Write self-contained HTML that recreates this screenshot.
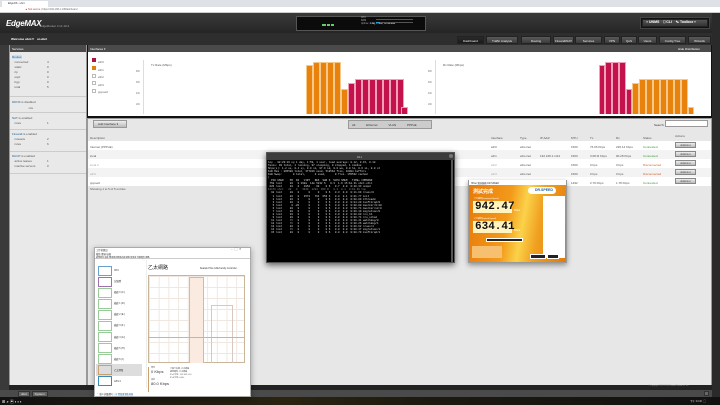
<!DOCTYPE html><html><head><meta charset="utf-8"><style>
*{margin:0;padding:0;box-sizing:border-box}
body{width:720px;height:405px;overflow:hidden;background:#3a3a3a;font-family:"Liberation Sans","Noto Sans CJK TC",sans-serif;font-size:3px;position:relative;color:#333}
.a{position:absolute}
.t{position:absolute;white-space:nowrap;font-size:3px}
.tab{position:absolute;top:36px;height:8px;background:linear-gradient(#5a5a5a,#3c3c3c);color:#eee;font-size:3px;line-height:8px;text-align:center;border:1px solid #222}
.row{position:absolute;left:88px;width:623px;height:9px}
.bar{position:absolute;bottom:0;border:1px solid #fde;border-bottom:none}
.o{background:#e8820c;border-color:#f5c98a}
.p{background:#c4134c;border-color:#f0a0b8}
.btn{position:absolute;width:21px;height:6px;background:linear-gradient(#eee,#bbb);border:1px solid #888;font-size:2.5px;text-align:center;line-height:5px}
.tm{position:absolute;left:2px;width:40px;height:14px}
.tm i{position:absolute;left:0;top:1px;width:14px;height:10px;border:1px solid #aac}
</style></head><body>
<div class="a" style="left:0;top:0;width:720px;height:7px;background:#dee1e6"></div>
<div class="a" style="left:2px;top:1px;width:46px;height:6px;background:#fff"></div>
<div class="t" style="left:8px;top:2px;color:#333;font-size:2.5px">EdgeOS - ubnt</div>
<div class="a" style="left:0;top:7px;width:720px;height:6px;background:#fff;border-bottom:1px solid #ccc"></div>
<div class="t" style="left:25px;top:8px;color:#666;font-size:2.5px"><span style="color:#c33">▲ Not secure</span> | https://192.168.1.1/#Dashboard</div>
<div class="a" style="left:0;top:13px;width:720px;height:20px;background:linear-gradient(#3a3a3a,#252525)"></div>
<div class="t" style="left:6px;top:19px;color:#fff;font-size:8px;font-style:italic;font-weight:bold;letter-spacing:-0.3px">EdgeMAX</div>
<div class="t" style="left:40px;top:24px;color:#aaa;font-size:3px">EdgeRouter 4 v1.10.2</div>
<div class="a" style="left:296px;top:16px;width:130px;height:15px;background:#0b0b0b;border:1px solid #555"></div>
<div class="a" style="left:322px;top:24px;width:4px;height:2px;background:#6c6"></div>
<div class="a" style="left:327px;top:24px;width:3px;height:2px;background:#6c6"></div>
<div class="a" style="left:331px;top:24px;width:3px;height:2px;background:#6c6"></div>
<div class="t" style="left:361px;top:17px;color:#aaa;font-size:2.3px;line-height:3px">CPU<br>RAM<br>Uptime: <span style="color:#fff">1 day, 1 hour, 59 minutes</span></div>
<div class="a" style="left:376px;top:19px;width:37px;height:1px;background:#555"></div>
<div class="a" style="left:376px;top:22px;width:37px;height:1px;background:#555"></div>
<div class="a" style="left:376px;top:22px;width:4px;height:1px;background:#39c"></div>
<div class="a" style="left:640px;top:17px;width:70px;height:12px;background:#111;border:1px solid #444"></div>
<div class="a" style="left:642px;top:19px;width:66px;height:8px;background:linear-gradient(#555,#333);border:1px solid #222"></div>
<div class="t" style="left:646px;top:20px;color:#fff;font-size:3.5px;font-weight:bold">≡ UNMS &nbsp;&nbsp; ⎕ CLI &nbsp;&nbsp; ✎ Toolbox ▾</div>
<div class="a" style="left:0;top:33px;width:720px;height:12px;background:#2e2e2e"></div>
<div class="t" style="left:11px;top:37px;color:#fff;font-weight:bold">Welcome ubnt ▾ &nbsp;&nbsp; ui.ubnt</div>
<div class="tab" style="left:457px;width:27px;background:linear-gradient(#2a2a2a,#1a1a1a)">Dashboard</div>
<div class="tab" style="left:486px;width:32px">Traffic Analysis</div>
<div class="tab" style="left:521px;width:30px">Routing</div>
<div class="tab" style="left:553px;width:21px">Firewall/NAT</div>
<div class="tab" style="left:575px;width:27px">Services</div>
<div class="tab" style="left:604px;width:16px">VPN</div>
<div class="tab" style="left:621px;width:16px">QoS</div>
<div class="tab" style="left:638px;width:19px">Users</div>
<div class="tab" style="left:659px;width:27px">Config Tree</div>
<div class="tab" style="left:688px;width:23px">Wizards</div>
<div class="a" style="left:9px;top:45px;width:78px;height:345px;background:#e9e9e9;border:1px solid #999"></div>
<div class="a" style="left:10px;top:45px;width:76px;height:7px;background:#4a4a4a"></div>
<div class="t" style="left:12px;top:47px;color:#fff">Services</div>
<div class="t" style="left:12px;top:55px;line-height:5px;color:#555"><span style="background:#cde;color:#269">Routes</span><br>&nbsp;&nbsp;&nbsp;connected<br>&nbsp;&nbsp;&nbsp;static<br>&nbsp;&nbsp;&nbsp;rip<br>&nbsp;&nbsp;&nbsp;ospf<br>&nbsp;&nbsp;&nbsp;bgp<br>&nbsp;&nbsp;&nbsp;total</div>
<div class="t" style="left:47px;top:60px;line-height:5px;color:#555">4<br>0<br>0<br>0<br>0<br>5</div>
<div class="a" style="left:10px;top:96px;width:76px;height:1px;background:#ccc"></div>
<div class="t" style="left:12px;top:99px;line-height:6px;color:#555"><span style="color:#269">DDNS</span> is disabled<br>&nbsp;&nbsp;&nbsp;&nbsp;&nbsp;&nbsp;&nbsp;&nbsp;&nbsp;&nbsp;&nbsp;&nbsp;&nbsp;&nbsp;&nbsp;&nbsp;&nbsp;&nbsp;&nbsp;&nbsp;n/a</div>
<div class="a" style="left:10px;top:112px;width:76px;height:1px;background:#ccc"></div>
<div class="t" style="left:12px;top:116px;line-height:5px;color:#555"><span style="color:#269">NAT</span> is enabled<br>&nbsp;&nbsp;&nbsp;rules</div>
<div class="t" style="left:47px;top:121px;color:#555">1</div>
<div class="a" style="left:10px;top:129px;width:76px;height:1px;background:#ccc"></div>
<div class="t" style="left:12px;top:132px;line-height:5px;color:#555"><span style="color:#269">Firewall</span> is enabled<br>&nbsp;&nbsp;&nbsp;rulesets<br>&nbsp;&nbsp;&nbsp;rules</div>
<div class="t" style="left:47px;top:137px;line-height:5px;color:#555">2<br>6</div>
<div class="a" style="left:10px;top:151px;width:76px;height:1px;background:#ccc"></div>
<div class="t" style="left:12px;top:154px;line-height:5px;color:#555"><span style="color:#269">DHCP</span> is enabled<br>&nbsp;&nbsp;&nbsp;active leases<br>&nbsp;&nbsp;&nbsp;inactive servers</div>
<div class="t" style="left:47px;top:159px;line-height:5px;color:#555">1<br>0</div>
<div class="a" style="left:10px;top:173px;width:76px;height:1px;background:#ccc"></div>
<div class="a" style="left:87px;top:45px;width:625px;height:73px;background:#fff;border:1px solid #111;border-bottom-width:2px"></div>
<div class="a" style="left:88px;top:45px;width:623px;height:7px;background:#4a4a4a"></div>
<div class="t" style="left:90px;top:47px;color:#fff">Interfaces ▾</div>
<div class="t" style="left:678px;top:47px;color:#fff">Hide Distribution</div>
<div class="a" style="left:92px;top:58px;width:4px;height:4px;background:#b0123f"></div>
<div class="a" style="left:92px;top:66px;width:4px;height:4px;background:#e2800c"></div>
<div class="a" style="left:92px;top:74px;width:4px;height:4px;border:1px solid #bbb"></div>
<div class="a" style="left:92px;top:81px;width:4px;height:4px;border:1px solid #bbb"></div>
<div class="a" style="left:92px;top:89px;width:4px;height:4px;border:1px solid #bbb"></div>
<div class="t" style="left:98px;top:59px;line-height:7.6px;color:#666">eth0<br>eth1<br>eth2<br>eth3<br>pppoe0</div>
<div class="a" style="left:143px;top:60px;width:1px;height:54px;background:#ddd"></div>
<div class="t" style="left:136px;top:67px;line-height:11px;color:#777;font-size:2.3px">800<br>600<br>400<br>200</div>
<div class="t" style="left:151px;top:63px;color:#555">Tx Rate (Mbps)</div>
<div class="a" style="left:435px;top:60px;width:1px;height:54px;background:#ddd"></div>
<div class="t" style="left:428px;top:67px;line-height:11px;color:#777;font-size:2.3px">800<br>600<br>400<br>200</div>
<div class="t" style="left:443px;top:63px;color:#555">Rx Rate (Mbps)</div>
<div class="a" style="left:300px;top:60px;width:108px;height:54px">
<div class="bar o" style="left:6px;width:7px;height:49px"></div>
<div class="bar o" style="left:13px;width:7px;height:52px"></div>
<div class="bar o" style="left:20px;width:7px;height:52px"></div>
<div class="bar o" style="left:27px;width:7px;height:52px"></div>
<div class="bar o" style="left:34px;width:7px;height:52px"></div>
<div class="bar o" style="left:41px;width:7px;height:25px"></div>
<div class="bar p" style="left:48px;width:7px;height:31px"></div>
<div class="bar p" style="left:55px;width:7px;height:35px"></div>
<div class="bar p" style="left:62px;width:7px;height:35px"></div>
<div class="bar p" style="left:69px;width:7px;height:35px"></div>
<div class="bar p" style="left:76px;width:7px;height:35px"></div>
<div class="bar p" style="left:83px;width:7px;height:35px"></div>
<div class="bar p" style="left:90px;width:7px;height:35px"></div>
<div class="bar p" style="left:97px;width:7px;height:35px"></div>
<div class="bar p" style="left:101px;width:7px;height:7px"></div>
</div>
<div class="a" style="left:592px;top:60px;width:108px;height:54px">
<div class="bar p" style="left:7px;width:6px;height:49px"></div>
<div class="bar p" style="left:13px;width:7px;height:52px"></div>
<div class="bar p" style="left:20px;width:7px;height:52px"></div>
<div class="bar p" style="left:27px;width:7px;height:52px"></div>
<div class="bar p" style="left:34px;width:6px;height:25px"></div>
<div class="bar o" style="left:40px;width:7px;height:31px"></div>
<div class="bar o" style="left:47px;width:7px;height:35px"></div>
<div class="bar o" style="left:54px;width:7px;height:35px"></div>
<div class="bar o" style="left:61px;width:7px;height:35px"></div>
<div class="bar o" style="left:68px;width:7px;height:35px"></div>
<div class="bar o" style="left:75px;width:7px;height:35px"></div>
<div class="bar o" style="left:82px;width:7px;height:35px"></div>
<div class="bar o" style="left:89px;width:7px;height:35px"></div>
<div class="bar o" style="left:96px;width:6px;height:7px"></div>
</div>
<div class="a" style="left:87px;top:118px;width:625px;height:268px;background:#e7e7e7;border:1px solid #999"></div>
<div class="a" style="left:93px;top:120px;width:34px;height:8px;background:linear-gradient(#eee,#bbb);border:1px solid #999"></div>
<div class="t" style="left:98px;top:122px">Add Interface ▾</div>
<div class="a" style="left:348px;top:120px;width:84px;height:9px;background:#ccc;border:1px solid #999"></div>
<div class="t" style="left:352px;top:123px;word-spacing:10px">All Ethernet VLAN PPPoE</div>
<div class="t" style="left:654px;top:123px">Search:</div>
<div class="a" style="left:665px;top:120px;width:43px;height:7px;background:#fff;border:1px solid #999"></div>
<div class="row" style="top:132px;background:#e7e7e7"></div>
<div class="row" style="top:141px;background:#fff"></div>
<div class="row" style="top:150px;background:#f3f3f3"></div>
<div class="row" style="top:159px;background:#fff"></div>
<div class="row" style="top:168px;background:#f3f3f3"></div>
<div class="row" style="top:177px;background:#fff"></div>
<div class="t" style="left:90px;top:134px;line-height:9px;color:#555">Description<br>Internet (PPPoE)<br>local<br><span style="color:#aaa">local 2</span><br><span style="color:#aaa">eth3</span><br>pppoe0</div>
<div class="t" style="left:90px;top:187px;color:#555">Showing 1 to 5 of 5 entries</div>
<div class="t" style="left:491px;top:134px;line-height:9px;color:#555">Interface<br>eth0<br>eth1<br><span style="color:#aaa">eth2</span><br><span style="color:#aaa">eth3</span><br>pppoe0</div>
<div class="t" style="left:520px;top:134px;line-height:9px;color:#555">Type<br>ethernet<br>ethernet<br>ethernet<br>ethernet<br>pppoe</div>
<div class="t" style="left:540px;top:134px;line-height:9px;color:#555">IP Addr<br><br>192.168.1.1/24</div>
<div class="t" style="left:571px;top:134px;line-height:9px;color:#555">MTU<br>1500<br>1500<br>1500<br>1500<br>1492</div>
<div class="t" style="left:590px;top:134px;line-height:9px;color:#555">Tx<br>76.06 Kbps<br>3.08 M Kbps<br>0 bps<br>0 bps<br>2.79 Kbps</div>
<div class="t" style="left:616px;top:134px;line-height:9px;color:#555">Rx<br>236.14 Kbps<br>90.28 Kbps<br>0 bps<br>0 bps<br>1.78 Kbps</div>
<div class="t" style="left:643px;top:134px;line-height:9px;color:#555">Status<br><span style="color:#393">Connected</span><br><span style="color:#393">Connected</span><br><span style="color:#c63">Disconnected</span><br><span style="color:#c63">Disconnected</span><br><span style="color:#393">Connected</span></div>
<div class="t" style="left:675px;top:134px;color:#555">Actions</div>
<div class="btn" style="left:675px;top:142px">Actions ▾</div>
<div class="btn" style="left:675px;top:151px">Actions ▾</div>
<div class="btn" style="left:675px;top:160px">Actions ▾</div>
<div class="btn" style="left:675px;top:169px">Actions ▾</div>
<div class="btn" style="left:675px;top:178px">Actions ▾</div>
<div class="a" style="left:9px;top:385px;width:703px;height:5px;background:#222"></div>
<div class="t" style="left:648px;top:385px;color:#888;font-size:2px">© Copyright 2012-2018 Ubiquiti Networks, Inc.</div>
<div class="a" style="left:0;top:390px;width:720px;height:7px;background:#4a4a4a"></div>
<div class="a" style="left:18px;top:391px;width:12px;height:6px;background:#666;border:1px solid #333"></div>
<div class="a" style="left:32px;top:391px;width:16px;height:6px;background:#666;border:1px solid #333"></div>
<div class="t" style="left:21px;top:392px;color:#eee;word-spacing:7px">ubnt System</div>
<div class="a" style="left:704px;top:391px;width:5px;height:5px;background:#666;border:1px solid #333"></div>
<div class="a" style="left:712px;top:13px;width:8px;height:384px;background:#2a2a2a"></div>
<div class="a" style="left:0;top:397px;width:720px;height:8px;background:linear-gradient(90deg,#111 0,#2a2410 40%,#1c1a10 60%,#111)"></div>
<div class="t" style="left:2px;top:399px;color:#fff;font-size:4px">⊞ ⌕ ▣ ▪ ▪ ▪</div>
<div class="t" style="left:690px;top:399px;color:#ccc;font-size:2.5px">下午 04:46 &nbsp;▢</div>
<div class="a" style="left:266px;top:152px;width:189px;height:111px;background:#000;border:1px solid #555;box-shadow:0 2px 6px rgba(0,0,0,.6)"></div>
<div class="a" style="left:267px;top:153px;width:187px;height:7px;background:#3c3c3c"></div>
<div class="t" style="left:357px;top:155px;color:#ddd">CLI</div>
<div class="a" style="left:449px;top:154px;width:4px;height:4px;border-radius:2px;background:#777"></div>
<div class="a" style="left:451px;top:160px;width:2px;height:102px;background:#555"></div>
<pre class="a" style="left:268px;top:161px;color:#ddd;font-family:'Liberation Mono',monospace;font-size:2.6px;line-height:3.05px;white-space:pre">top - 08:29:19 up 1 day, 1:59, 1 user, load average: 0.12, 0.15, 0.18
Tasks: 99 total, 1 running, 97 sleeping, 0 stopped, 1 zombie
%Cpu(s): 1.2 us, 0.4 sy, 0.0 ni, 97.9 id, 0.0 wa, 0.0 hi, 0.6 si, 0.0 st
KiB Mem : 895580 total, 377016 used, 518564 free, 16004 buffers
KiB Swap:       0 total,      0 used,      0 free. 155532 cached
|
  PID USER    PR  NI   VIRT   RES  SHR S  %CPU %MEM   TIME+ COMMAND
 758 root     20   0 160m  14m 5232 S   0.3  1.6 15:18.31 ubnt-util
 626 root     20   0   1952    60    0 S   0.7  0.0  0:20.33 snmpd
<span style="color:#888">12176 ubnt   20   0   3040  1284  960 R   0.3  0.1  0:01.69 top</span>
  10 root     20   0      0     0    0 S   0.3  0.0  0:11.69 rcuos/0
   1 root     20   0   2572   764  656 S   0.0  0.1  0:01.77 init
   2 root     20   0      0     0    0 S   0.0  0.0  0:00.09 kthreadd
   3 root     20   0      0     0    0 S   0.0  0.0  0:04.29 ksoftirqd/0
   5 root      0 -20      0     0    0 S   0.0  0.0  0:00.00 kworker/0:0H
   6 root     20   0      0     0    0 S   0.0  0.0  0:00.74 kworker/u8:0
   7 root     20   0      0     0    0 S   0.0  0.0  0:09.19 migration/0
   8 root     20   0      0     0    0 S   0.0  0.0  0:00.00 rcu_bh
   9 root     20   0      0     0    0 S   0.0  0.0  0:00.74 rcu_sched
  11 root     rt   0      0     0    0 S   0.0  0.0  0:00.41 watchdog/0
  12 root     rt   0      0     0    0 S   0.0  0.0  0:00.26 watchdog/1
  13 root     20   0      0     0    0 S   0.0  0.0  0:00.62 rcuos/1
  14 root     rt   0      0     0    0 S   0.0  0.0  0:00.17 migration/1
  15 root     20   0      0     0    0 S   0.0  0.0  0:00.79 ksoftirqd/1</pre>
<div class="a" style="left:468px;top:180px;width:99px;height:83px;background:linear-gradient(100deg,#e67a0a 0%,#f39a1a 40%,#fbd24a 55%,#f0a020 70%,#e47808 100%);border:1px solid #999;box-shadow:0 2px 5px rgba(0,0,0,.4)"></div>
<div class="a" style="left:469px;top:180px;width:97px;height:5px;background:#fff"></div>
<div class="t" style="left:471px;top:181px;font-size:2.3px;color:#333">HiNet 測速服務 DR.SPEED</div>
<div class="t" style="left:473px;top:188px;color:#fff;font-size:5px;font-weight:bold">測試完成</div>
<div class="a" style="left:528px;top:187px;width:28px;height:7px;border-radius:4px;background:#fff"></div>
<div class="t" style="left:535px;top:188px;color:#1a5a9a;font-size:3.5px;font-weight:bold">DR.SPEED</div>
<div class="a" style="left:543px;top:196px;width:22px;height:62px;background:#fff"></div>
<div class="t" style="left:474px;top:197px;font-size:2px;color:#fff">下行速率(Download Speed)</div>
<div class="a" style="left:473px;top:201px;width:39px;height:12px;background:#fff3c0"></div>
<div class="t" style="left:475px;top:201px;font-family:'Liberation Mono',monospace;font-size:11px;font-weight:bold;color:#111;line-height:12px">942.47</div>
<div class="t" style="left:514px;top:209px;color:#fff;font-size:2.5px">Mbps</div>
<div class="t" style="left:474px;top:217px;font-size:2px;color:#fff">上行速率(Upload Speed)</div>
<div class="a" style="left:473px;top:221px;width:39px;height:12px;background:#fff3c0"></div>
<div class="t" style="left:475px;top:221px;font-family:'Liberation Mono',monospace;font-size:11px;font-weight:bold;color:#111;line-height:12px">634.41</div>
<div class="t" style="left:514px;top:229px;color:#fff;font-size:2.5px">Mbps</div>
<div class="a" style="left:486px;top:238px;width:37px;height:4px;background:#222;border:1px solid #fff"></div>
<div class="a" style="left:472px;top:246px;width:30px;height:12px;background:#f6c070"></div>
<div class="a" style="left:547px;top:254px;width:12px;height:5px;background:#222;border:1px solid #fff"></div>
<div class="a" style="left:530px;top:254px;width:16px;height:5px;background:#222;border:1px solid #fff"></div>
<div class="a" style="left:94px;top:247px;width:157px;height:150px;background:#fff;border:1px solid #aaa;box-shadow:0 2px 6px rgba(0,0,0,.35)"></div>
<div class="t" style="left:96px;top:248px;font-size:2.3px;color:#333">工作管理員</div>
<div class="t" style="left:231px;top:247px;font-size:3px;color:#666">–&nbsp;&nbsp;▢&nbsp;&nbsp;✕</div>
<div class="t" style="left:96px;top:252px;font-size:2.3px;color:#333">檔案 選項 檢視</div>
<div class="a" style="left:95px;top:256px;width:155px;height:3px;border-bottom:1px solid #ccc"></div>
<div class="t" style="left:96px;top:255.5px;font-size:2px;color:#333">處理程序 效能 應用程式歷程記錄 開機 使用者 詳細資料 服務</div>
<div class="a" style="left:146px;top:260px;width:1px;height:128px;background:#eee"></div>
<div class="a" style="left:96px;top:265px;width:50px;height:120px">
<div class="tm" style="top:0"><i style="border-color:#6aa0d0"></i></div>
<div class="tm" style="top:11px"><i style="border-color:#a070b0"></i></div>
<div class="tm" style="top:22px"><i style="border-color:#9c9"></i></div>
<div class="tm" style="top:33px"><i style="border-color:#9c9"></i></div>
<div class="tm" style="top:44px"><i style="border-color:#9c9"></i></div>
<div class="tm" style="top:55px"><i style="border-color:#9c9"></i></div>
<div class="tm" style="top:66px"><i style="border-color:#9c9"></i></div>
<div class="tm" style="top:77px"><i style="border-color:#9c9"></i></div>
<div class="tm" style="top:88px"><i style="border-color:#9c9"></i></div>
<div class="a" style="left:0;top:99px;width:46px;height:12px;background:#ddd"></div>
<div class="tm" style="top:99px"><i style="border-color:#c9a070"></i></div>
<div class="tm" style="top:110px"><i style="border-color:#3a8ac0"></i></div>
</div>
<div class="t" style="left:114px;top:266px;font-size:2.3px;line-height:11.1px;color:#333">CPU<br>記憶體<br>磁碟 0 (C:)<br>磁碟 1 (D:)<br>磁碟 2 (E:)<br>磁碟 3 (F:)<br>磁碟 4 (G:)<br>磁碟 5 (H:)<br>磁碟 6 (I:)<br>乙太網路<br>GPU 0</div>
<div class="t" style="left:148px;top:264px;font-size:5px;color:#222">乙太網路</div>
<div class="t" style="left:200px;top:268px;font-size:2.3px;color:#333">Realtek PCIe GbE Family Controller</div>
<div class="a" style="left:148px;top:275px;width:97px;height:88px;border:1px solid #c9b69a;background-color:#fff;background-image:linear-gradient(#f0e8e0 1px,transparent 1px),linear-gradient(90deg,#f0e8e0 1px,transparent 1px);background-size:9.7px 11px"></div>
<div class="a" style="left:189px;top:277px;width:15px;height:86px;background:#fbeadf;border:1px solid #d8b8a0;border-bottom:none"></div>
<div class="a" style="left:211px;top:305px;width:22px;height:58px;border:1px solid #d8c8c0;border-bottom:none"></div>
<div class="a" style="left:148px;top:337px;width:97px;height:1px;background:#c9b69a"></div>
<div class="a" style="left:148px;top:367px;width:1px;height:13px;background:#c9a070"></div>
<div class="t" style="left:151px;top:366px;font-size:2px;color:#666">傳送</div>
<div class="t" style="left:151px;top:369px;font-size:4px;color:#333">0 Kbps</div>
<div class="a" style="left:148px;top:380px;width:1px;height:12px;background:#c9a070"></div>
<div class="t" style="left:151px;top:378px;font-size:2px;color:#666">接收</div>
<div class="t" style="left:151px;top:381px;font-size:4px;color:#333">80.0 Kbps</div>
<div class="t" style="left:170px;top:368px;font-size:2px;line-height:3px;color:#555">介面卡名稱: 乙太網路<br>連線類型: 乙太網路<br>IPv4 位址: 192.168.1.10<br>IPv6 位址: fe80::</div>
<div class="t" style="left:97px;top:392px;font-size:2.2px;color:#333">⌃ 較少詳細資料 &nbsp;| <span style="color:#26a">⊕ 開啟資源監視器</span></div>
</body></html>
